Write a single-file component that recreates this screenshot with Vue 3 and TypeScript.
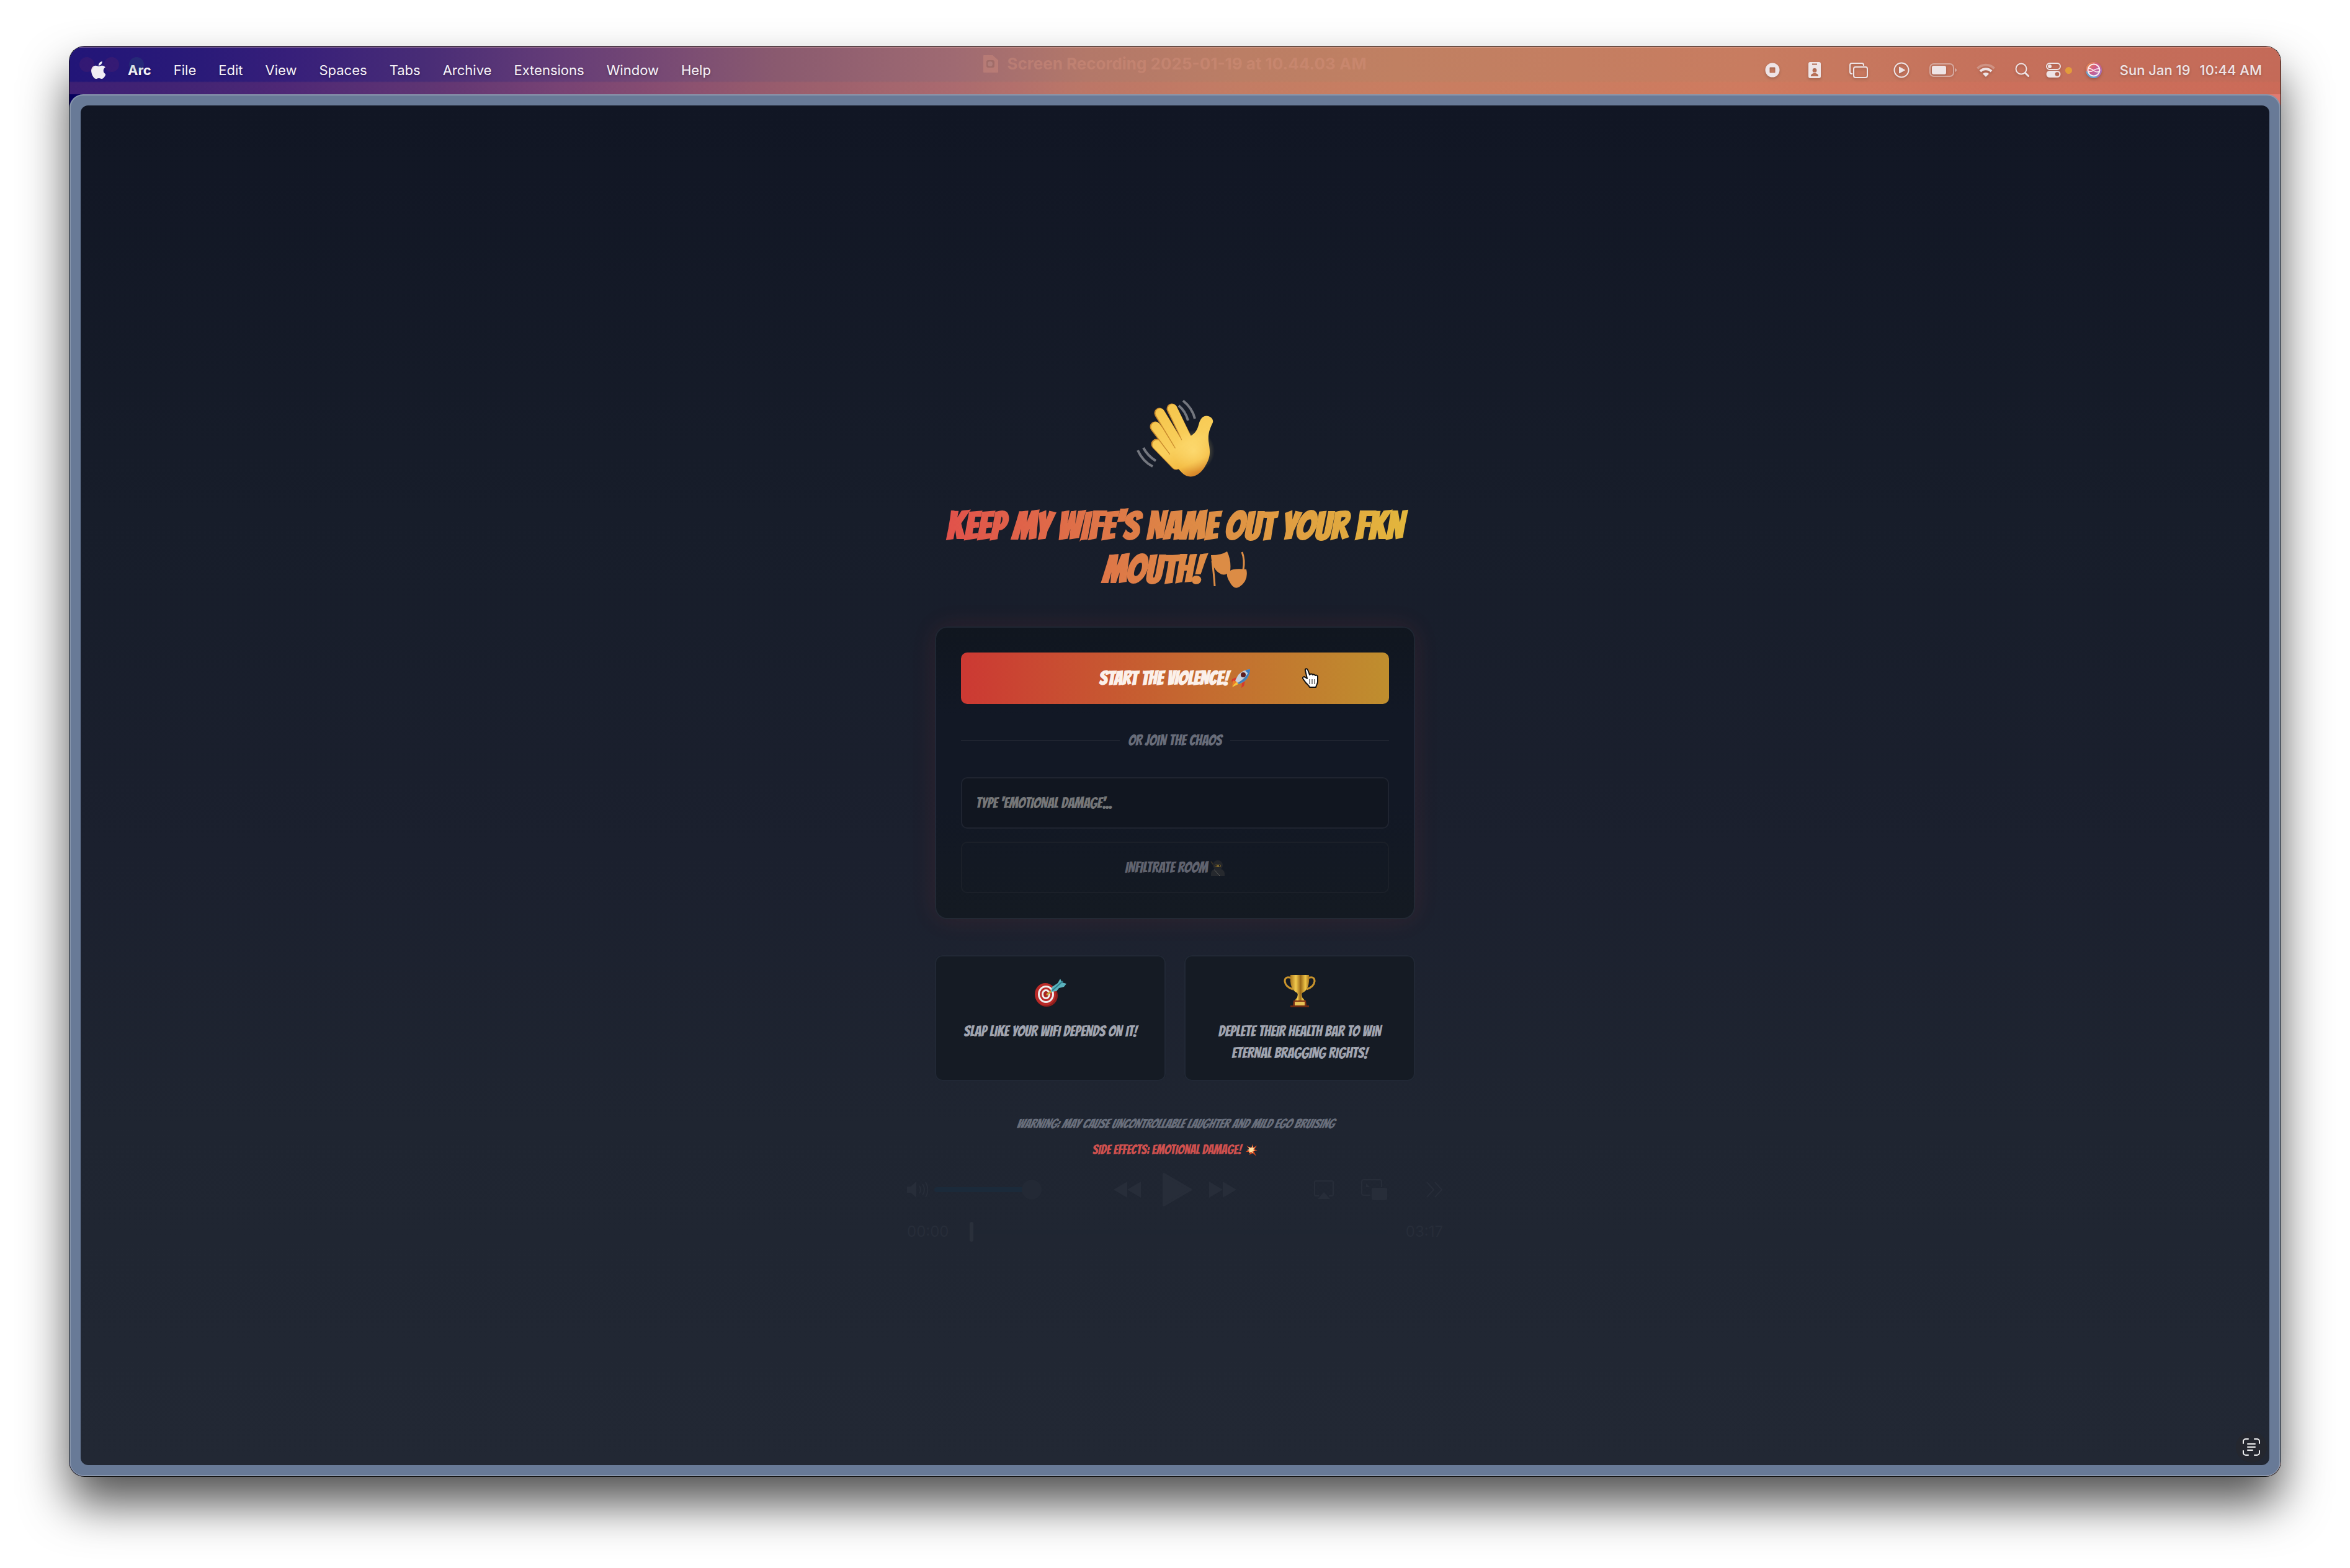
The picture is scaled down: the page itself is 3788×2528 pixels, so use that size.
<script setup lang="ts">
import { ref } from 'vue'

const menus: string[] = ['File', 'Edit', 'View', 'Spaces', 'Tabs', 'Archive', 'Extensions', 'Window', 'Help']
const roomCode = ref('')
const volume = ref(100)
const position = ref(0)
</script>

<template>
  <div class="desktop">
    <div class="window">
      <header class="menubar">
        <div class="ghost-lights"><i></i><i></i><i></i></div>
        <div class="ghost-title">
          <svg viewBox="0 0 24 28" width="24" height="28"><path d="M1 0h14l9 8v19a1 1 0 0 1-1 1H1a1 1 0 0 1-1-1V1a1 1 0 0 1 1-1z" fill="currentColor" /><rect x="5" y="8" width="13" height="12" rx="3" fill="#a06c68" /><circle cx="11" cy="14" r="4" fill="#b07d7a" /></svg>
          <span>Screen Recording 2025-01-19 at 10.44.03 AM</span>
        </div>
        <nav class="menus">
          <svg class="apple" viewBox="4 32 366 448" width="23" height="28"><path fill="#f1eff4" d="M318.7 268.7c-.2-36.7 16.4-64.4 50-84.8-18.8-26.9-47.2-41.7-84.7-44.6-35.5-2.8-74.3 20.7-88.5 20.7-15 0-49.4-19.7-76.4-19.7C63.3 141.2 4 184.8 4 273.5q0 39.3 14.4 81.2c12.8 36.7 59 126.7 107.2 125.2 25.2-.6 43-17.9 75.8-17.9 31.8 0 48.3 17.9 76.4 17.9 48.6-.7 90.4-82.5 102.6-119.3-65.2-30.7-61.7-90-61.7-91.9zm-56.6-164.2c27.3-32.4 24.8-61.9 24-72.5-24.1 1.4-52 16.4-67.9 34.9-17.5 19.8-27.8 44.3-25.6 71.9 26.1 2 49.9-11.4 69.5-34.3z" /></svg>
          <a href="#" class="app-name">Arc</a>
          <a v-for="m in menus" :key="m" href="#">{{ m }}</a>
        </nav>
        <div class="status">
          <svg viewBox="0 0 24 24" width="24" height="24"><path fill="currentColor" fill-rule="evenodd" d="M12 .5a11.500 11.500 0 1 1 0 23 11.500 11.500 0 0 1 0-23zM8.500 7.500a1 1 0 0 0-1 1v7a1 1 0 0 0 1 1h7a1 1 0 0 0 1-1v-7a1 1 0 0 0-1-1z" /></svg>
          <svg class="far" viewBox="0 0 20 28" width="20" height="28"><path fill="currentColor" fill-rule="evenodd" d="M3 1h14a3 3 0 0 1 3 3v20a3 3 0 0 1-3 3H3a3 3 0 0 1-3-3V4a3 3 0 0 1 3-3zM6 3.500v2h8v-2zM10 11a3.400 3.400 0 1 0 0 6.800 3.400 3.400 0 0 0 0-6.800zM4 24h12c0-3.500-2.500-5-6-5s-6 1.500-6 5z" /></svg>
          <svg class="far" viewBox="0 0 30 26" width="30" height="26" fill="none" stroke="currentColor" stroke-width="2"><path d="M5 19H4a3 3 0 0 1-3-3V5a3 3 0 0 1 3-3h16a3 3 0 0 1 3 3v1" /><rect x="7" y="8" width="22" height="17" rx="3" /></svg>
          <svg class="mid" viewBox="0 0 26 26" width="26" height="26"><circle cx="13" cy="13" r="11.500" fill="none" stroke="currentColor" stroke-width="2" /><path d="M9.500 8v10l9-5z" fill="currentColor" stroke="currentColor" stroke-linejoin="round" /></svg>
          <svg class="near" viewBox="0 0 44 22" width="44" height="22"><rect x="1" y="1" width="38" height="20" rx="6" fill="none" stroke="currentColor" stroke-opacity=".5" stroke-width="2" /><rect x="4" y="4" width="23" height="14" rx="3" fill="currentColor" /><path d="M41 8c4 1 4 5 0 6z" fill="currentColor" opacity=".5" /></svg>
          <svg class="near" viewBox="0 0 30 24" width="30" height="24" fill="none" stroke="currentColor" stroke-width="4"><path d="M1.500 9.500a19 19 0 0 1 27 0" opacity=".3" /><path d="M6 14a12.800 12.800 0 0 1 18 0" /><path d="M10 18a7 7 0 0 1 10 0l-5 5z" fill="currentColor" stroke="none" /></svg>
          <svg class="near" viewBox="0 0 24 24" width="24" height="24" fill="none" stroke="currentColor" stroke-linecap="round"><circle cx="10" cy="10" r="8.500" stroke-width="2" /><path d="M16.500 16.500l5 5" stroke-width="3" /></svg>
          <svg class="close" viewBox="0 0 24 24" width="24" height="24"><rect x="1" y="1" width="22" height="10" rx="5" fill="none" stroke="currentColor" stroke-width="2" /><circle cx="6" cy="6" r="3" fill="currentColor" /><path fill="currentColor" fill-rule="evenodd" d="M6 13h12a5.500 5.500 0 0 1 0 11H6a5.500 5.500 0 0 1 0-11zm12 2.200a3.300 3.300 0 1 0 0 6.600 3.300 3.300 0 0 0 0-6.600z" /></svg>
          <i class="mic-dot"></i>
          <svg class="siri" viewBox="0 0 26 26" width="26" height="26">
            <defs><linearGradient id="siri" x1="0" y1="0" x2="1" y2="1"><stop offset="0" stop-color="#eda13d" /><stop offset=".45" stop-color="#d25a86" /><stop offset="1" stop-color="#8f7bd8" /></linearGradient></defs>
            <circle cx="13" cy="13" r="13" fill="url(#siri)" /><path d="M0 14a13 13 0 0 0 20 10c-6-1-12-4-20-10z" fill="#4fb1de" opacity=".8" />
            <g fill="none" stroke="#fbeef0"><circle cx="13" cy="13" r="9.500" stroke-width="2" /><path d="M4 10c7-1 10 9 18 5M4 15c7 3 10-6 18-4" stroke-width="1.500" /></g>
          </svg>
          <span class="clock"><span>Sun Jan 19</span><span>10:44 AM</span></span>
        </div>
      </header>

      <div class="frame">
        <main class="page">
          <div class="column">
            <svg class="wave" viewBox="0 0 128 128" width="128" height="128">
              <defs>
                <linearGradient id="skin" gradientUnits="userSpaceOnUse" x1="40" y1="10" x2="90" y2="124"><stop offset="0" stop-color="#f5c54b" /><stop offset=".6" stop-color="#f9cf5c" /><stop offset=".85" stop-color="#f4bd45" /><stop offset="1" stop-color="#d8892b" /></linearGradient>
                <radialGradient id="glow" gradientUnits="userSpaceOnUse" cx="94" cy="84" r="34"><stop offset="0" stop-color="#ffe07a" /><stop offset="1" stop-color="#ffe07a" stop-opacity="0" /></radialGradient>
              </defs>
              <g fill="none" stroke="#74777f" stroke-width="4"><path d="M77 3q15 12 19 29" /><path d="M70 11q11 9 15 24" /><path d="M4 83q8 18 24 26" /><path d="M13 79q7 13 20 21" /></g>
              <g fill="none" stroke-linecap="round">
                <path d="M34 73L66 106" stroke="#c98a2c" stroke-width="17" /><path d="M35 74L66 106" stroke="url(#skin)" stroke-width="15" />
                <path d="M32 45L70 95" stroke="#c98a2c" stroke-width="17" /><path d="M33 45L70 95" stroke="url(#skin)" stroke-width="15" />
                <path d="M39 23L77 85" stroke="#c98a2c" stroke-width="17" /><path d="M40 23L77 85" stroke="url(#skin)" stroke-width="15" />
                <path d="M59 16L88 75" stroke="#c98a2c" stroke-width="17" /><path d="M60 16L88 75" stroke="url(#skin)" stroke-width="15" />
              </g>
              <path fill="url(#skin)" d="M78 62C86 63 95 58 99 50C103 43 102 36 108 30C114 24 127 29 125 38C121 47 117 54 118 68C120 82 123 92 113 108C104 124 88 132 75 119L52 94L66 78z" />
              <circle cx="94" cy="84" r="34" fill="url(#glow)" opacity=".7" />
            </svg>

            <h1 class="title">Keep my wife's name out your fkn <span class="nowrap">mouth!
              <svg class="masks" viewBox="0 0 60 60" width="60" height="60"><path fill="#dc8c45" d="M1 7Q18 7 27 1Q34 16 32 32Q38 28 58 30Q62 48 47 58Q38 64 31 50Q26 42 27 37Q20 41 13 35Q2 27 1 7z" /><path d="M3 16Q6 40 7 57M51 2Q56 15 53 31" fill="none" stroke="#dc8c45" stroke-width="3" /></svg></span>
            </h1>

            <form class="card" @submit.prevent>
              <button type="button" class="start">
                <span>Start the violence!</span>
                <svg viewBox="0 0 32 32" width="32" height="32"><path d="M9 14L2 17l-1 4 8-2zM18 23l-1 8 4-3 2-8z" fill="#d63a2c" /><path d="M8 20l-6 10 10-5z" fill="#f5c53c" /><path d="M4 19l-2 9 7-6z" fill="#ef7a2a" /><path d="M31 1Q19 2 12 10L7 19l6 6 8-4Q30 14 31 1z" fill="#c6d0dc" /><path d="M31 1q-1 14-10 20l-8 4-2-2Q25 15 31 1z" fill="#4480b8" /><path d="M31 1q-4 0-8 2l6 6q2-4 2-8z" fill="#3c7cc0" /><circle cx="20" cy="10" r="4" fill="#5c1d20" /></svg>
                <svg class="cursor" viewBox="0 0 26 32" width="26" height="32"><path d="M5 4C4 1 8 0 9 3l3 8c1-2 4-2 5 0 1-1 3-1 4 1 2-1 4 0 4 2v8c0 3-2 5-3 9l-10 0c-1-3-4-5-6-7l-5-7c-1-2 2-4 4-2l3 2z" fill="#fff" stroke="#111" stroke-width="2" stroke-linejoin="round" /><path d="M12 18v8M16 18v8M20 18v8" stroke="#111" stroke-width="1" fill="none" /></svg>
              </button>
              <div class="divider"><span>Or join the chaos</span></div>
              <div class="join">
                <input v-model="roomCode" type="text" aria-label="Room code" placeholder="TYPE 'EMOTIONAL DAMAGE'..." />
                <button type="submit" class="infiltrate">
                  <span>Infiltrate room</span>
                  <svg viewBox="0 0 24 26" width="24" height="26"><path d="M1 3l10 13" stroke="#3a3326" stroke-width="2" /><path d="M1 26q-1-9 6-11h10q7 2 6 11z" fill="#26292e" /><circle cx="12" cy="9" r="8" fill="#23262b" /><rect x="7" y="8" width="10" height="4" rx="2" fill="#7a642c" /><path d="M8 10h2M14 10h2" stroke="#15171c" stroke-width="2" /><path d="M6 16l9 10" stroke="#5a5a58" /></svg>
                </button>
              </div>
            </form>

            <section class="features">
              <article>
                <svg viewBox="0 0 54 54" width="54" height="54"><ellipse cx="21" cy="34" rx="18" ry="18" fill="#8d1f1d" /><ellipse cx="19" cy="32" rx="17" ry="18" fill="#b92a28" /><ellipse cx="20" cy="32" rx="13" ry="14" fill="#eee" /><ellipse cx="20" cy="32" rx="10" ry="11" fill="#b92a28" /><ellipse cx="20" cy="32" rx="7" ry="8" fill="#eee" /><ellipse cx="20" cy="32" rx="4" ry="5" fill="#a82522" /><path d="M21 33l8-6" stroke="#c9a23a" stroke-width="3" /><path d="M28 28l2-8 9-6 4-7 3 6 7 2-4 5-8 2-4 5z" fill="#5ab3be" /><path d="M30 26L47 11" stroke="#2f7f8c" stroke-width="2" /></svg>
                <p>Slap like your wifi depends on it!</p>
              </article>
              <article>
                <svg viewBox="0 0 54 54" width="54" height="54"><defs><linearGradient id="gold"><stop offset="0" stop-color="#a8741c" /><stop offset=".3" stop-color="#f2ca4e" /><stop offset=".55" stop-color="#9c6a18" /><stop offset=".8" stop-color="#efc648" /><stop offset="1" stop-color="#a8741c" /></linearGradient></defs><path d="M14 6Q3 2 3 11q1 9 13 13M40 6q11-4 11 5-1 9-13 13" fill="none" stroke="#c9942c" stroke-width="3" /><path d="M12 1h30q2 23-11 29l-1 3h-6l-1-3Q10 24 12 1z" fill="url(#gold)" /><path d="M24 32h6l1 5 5 6H18l5-6z" fill="url(#gold)" /><path d="M17 42h20l1 8H16z" fill="#803114" /><rect x="19" y="44" width="16" height="6" fill="#e8c256" /><path d="M12 50h30v3H12z" fill="#6c2a12" /></svg>
                <p>Deplete their health bar to win eternal bragging rights!</p>
              </article>
            </section>

            <footer class="notes">
              <p class="warn">Warning: may cause uncontrollable laughter and mild ego bruising</p>
              <p class="side"><span>Side effects: emotional damage!</span><svg viewBox="0 0 20 20" width="20" height="20"><path d="M10 6L13 0l0 6 6-3-4 6 5 2-6 1 4 8-6-5-5 3 1-5-7 0 6-4-5-6 6 3z" fill="#d6481f" /><path d="M10 7l2-4 0 4 4-1-3 3 3 2-4 1 1 4-3-3-4 2 1-4-4-1 4-1-2-4z" fill="#fbe0a0" /></svg></p>
            </footer>
          </div>

          <div class="player">
            <div class="player-row">
              <svg viewBox="0 0 34 26" width="34" height="26"><path d="M0 8h6l9-8v26l-9-8H0z" fill="currentColor" /><path d="M20 7q4 6 0 12M25 4q6 9 0 18M30 1q7 12 0 24" fill="none" stroke="currentColor" stroke-width="2" /></svg>
              <input v-model="volume" class="volume" type="range" aria-label="Volume" />
              <button type="button" class="rewind" aria-label="Rewind"><svg viewBox="0 0 44 26" width="44" height="26"><path d="M22 0v26L0 13zM44 0v26L22 13z" fill="currentColor" /></svg></button>
              <button type="button" class="play" aria-label="Play"><svg viewBox="0 0 48 56" width="48" height="56"><path d="M3 3v50l43-25z" fill="currentColor" stroke="currentColor" stroke-width="4" stroke-linejoin="round" /></svg></button>
              <button type="button" class="forward" aria-label="Fast forward"><svg viewBox="0 0 44 26" width="44" height="26"><path d="M0 0v26l22-13zM22 0v26l22-13z" fill="currentColor" /></svg></button>
              <button type="button" class="airplay" aria-label="AirPlay"><svg viewBox="0 0 32 30" width="32" height="30"><path d="M8 25H3a2 2 0 0 1-2-2V3a2 2 0 0 1 2-2h26a2 2 0 0 1 2 2v20a2 2 0 0 1-2 2h-5" fill="none" stroke="currentColor" stroke-width="2" /><path d="M16 19l10 11H6z" fill="currentColor" /></svg></button>
              <button type="button" class="pip" aria-label="Picture in picture"><svg viewBox="0 0 42 34" width="42" height="34"><path d="M15 26H4a3 3 0 0 1-3-3V4a3 3 0 0 1 3-3h26a3 3 0 0 1 3 3v9" fill="none" stroke="currentColor" stroke-width="2" /><rect x="17" y="14" width="25" height="20" rx="3" fill="currentColor" /><path d="M8 7v6h6z" fill="currentColor" /></svg></button>
              <button type="button" class="more" aria-label="More"><svg viewBox="0 0 28 26" width="28" height="26"><path d="M2 1l11 12L2 25M15 1l11 12-11 12" fill="none" stroke="currentColor" stroke-width="2" /></svg></button>
            </div>
            <div class="player-row">
              <span>00:00</span>
              <input v-model="position" class="seek" type="range" aria-label="Position" />
              <span>03:17</span>
            </div>
          </div>

          <button type="button" class="live-text" aria-label="Live text">
            <svg viewBox="0 0 28 28" width="28" height="28" fill="none" stroke="#f0f1f2" stroke-width="2" stroke-linecap="round"><path d="M1 8V5a4 4 0 0 1 4-4h4M19 1h4a4 4 0 0 1 4 4v3M27 20v3a4 4 0 0 1-4 4h-4M9 27H5a4 4 0 0 1-4-4v-3" /><path d="M8 9h12M8 14h12M8 19h8" /></svg>
          </button>
        </main>
      </div>
    </div>
  </div>
</template>

<style>
body {
  background: #fff;
}
</style>

<style scoped>
* {
  box-sizing: border-box;
}
h1,
p {
  margin: 0;
}
button {
  font: inherit;
}
svg {
  display: block;
  flex: none;
}

.desktop {
  display: flex;
  min-height: 100vh;
  padding: 75px 112px 148px;
  background: #fff;
}
.window {
  flex: 1;
  min-width: 0;
  display: flex;
  flex-direction: column;
  border-radius: 24px;
  background: linear-gradient(90deg, #06005c, #06005c 24%, #d8755f 50%, #e07b72);
  box-shadow: 0 0 0 1px #111, 0 44px 76px rgba(0, 0, 0, 0.68);
  overflow: hidden;
}

.menubar {
  position: relative;
  display: flex;
  justify-content: space-between;
  align-items: center;
  height: 77px;
  padding: 0 30px 3px 35px;
  border-top: 2px solid rgba(255, 255, 255, 0.2);
  background:
    linear-gradient(180deg, transparent 54px, rgba(255, 110, 90, 0.12) 56px),
    linear-gradient(90deg, #221578 0%, #2a1a78 6%, #371f7a 10%, #482c76 16%, #643c77 22%, #784a74 27%, #8a5a6f 32%, #9f6a72 40%, #b37869 46%, #bb7e65 53%, #c08062 60%, #c87c60 76%, #c5705b 88%, #c46a58 100%);
  font-family: Inter, "Liberation Sans", sans-serif;
  font-size: 22px;
  line-height: 30px;
  color: #eee4e6;
}
.menus {
  display: flex;
  align-items: center;
  gap: 36px;
}
.menus a {
  color: #f6f2f8;
  text-decoration: none;
  text-shadow: 0 2px 4px rgba(0, 0, 0, 0.25);
}
.menus .app-name {
  font-weight: 700;
}
.status {
  display: flex;
  align-items: center;
}
.status svg {
  filter: drop-shadow(0 2px 2px rgba(0, 0, 0, 0.2));
}
.far {
  margin-left: 46px;
}
.mid {
  margin-left: 41px;
}
.near {
  margin-left: 32px;
}
.close {
  margin-left: 26px;
}
.mic-dot {
  width: 11px;
  height: 11px;
  margin-left: 7px;
  border-radius: 50%;
  background: #e39c3b;
}
.siri {
  margin-left: 22px;
}
.clock {
  display: flex;
  gap: 15px;
  margin-left: 29px;
  font-weight: 500;
  text-shadow: 0 2px 4px rgba(0, 0, 0, 0.2);
}
.ghost-lights {
  position: absolute;
  top: 15px;
  left: 16px;
  display: flex;
  gap: 16px;
}
.ghost-lights i {
  width: 24px;
  height: 24px;
  border-radius: 50%;
  background: rgba(200, 60, 90, 0.1);
}
.ghost-lights i:last-child {
  background: rgba(40, 140, 120, 0.15);
}
.ghost-title {
  position: absolute;
  top: 11px;
  left: 0;
  right: 0;
  display: flex;
  justify-content: center;
  align-items: center;
  gap: 14px;
  color: rgba(220, 150, 130, 0.35);
  font-size: 26px;
  font-weight: 700;
}

.frame {
  flex: 1;
  display: flex;
  padding: 18px;
  border-radius: 22px;
  background: #687a97;
  box-shadow: inset 0 0 0 2px rgba(255, 255, 255, 0.22);
}
.page {
  position: relative;
  flex: 1;
  display: flex;
  justify-content: center;
  align-items: center;
  border-radius: 12px;
  background: linear-gradient(180deg, #111624 0%, #171d2a 30%, #1b202e 55%, #1f2531 75%, #222834 100%);
  font-family: Bangers, "Liberation Sans Narrow", sans-serif;
  font-weight: 400;
  text-transform: uppercase;
}
.column {
  display: flex;
  flex-direction: column;
  width: 774px;
  max-width: 100%;
  padding: 4px 0 24px;
}
.wave {
  align-self: center;
}
.title {
  margin-top: 42px;
  font-size: 62px;
  font-weight: 700;
  line-height: 70px;
  text-align: center;
  color: transparent;
  background: linear-gradient(90deg, #e14f4b, #dd8646 50%, #e3b83c);
  background-clip: text;
  -webkit-background-clip: text;
}
.nowrap {
  display: inline-flex;
  align-items: center;
  gap: 12px;
  height: 70px;
  vertical-align: top;
}

.card {
  display: flex;
  flex-direction: column;
  margin-top: 57px;
  padding: 42px;
  border-radius: 20px;
  background: linear-gradient(180deg, #10161f, #121825 30%, #121825 60%, #141a22);
  box-shadow: inset 0 0 0 2px rgba(140, 150, 180, 0.13), 0 0 40px rgba(239, 68, 68, 0.11);
}
.start,
.infiltrate {
  position: relative;
  display: flex;
  justify-content: center;
  align-items: center;
  gap: 4px;
  height: 83px;
  padding: 0;
  border: 0;
  border-radius: 10px;
  text-transform: inherit;
}
.start {
  background: linear-gradient(90deg, #cc3933, #c56530 50%, #bf8e2e);
  color: #fbf0ea;
  font-size: 31px;
  font-weight: 700;
  line-height: 34px;
}
.cursor {
  position: absolute;
  right: 114px;
  top: 25px;
}
.divider {
  display: flex;
  align-items: center;
  gap: 13px;
  margin: 42px 0;
  color: #686c79;
  font-size: 24px;
  line-height: 34px;
}
.divider::before,
.divider::after {
  content: "";
  flex: 1;
  height: 2px;
  background: #1f2430;
}
.join {
  display: flex;
  flex-direction: column;
  gap: 21px;
}
.join input {
  width: 100%;
  height: 83px;
  padding: 0 22px;
  border: 2px solid #1f2430;
  border-radius: 10px;
  background: #111620;
  color: #a0a4af;
  font: inherit;
  font-size: 24px;
}
.join input::placeholder {
  color: #757678;
  opacity: 1;
}
.infiltrate {
  border: 2px solid #1b2029;
  background: transparent;
  color: #60636f;
  font-size: 24px;
  line-height: 34px;
}

.features {
  display: grid;
  grid-template-columns: 1fr 1fr;
  gap: 30px;
  margin-top: 58px;
}
.features article {
  display: flex;
  flex-direction: column;
  align-items: center;
  padding: 31px 28px 28px;
  border-radius: 12px;
  background: #151b24;
  box-shadow: inset 0 0 0 2px #212835;
}
.features p {
  margin-top: 20px;
  color: #a0a4af;
  font-size: 24px;
  line-height: 35px;
  text-align: center;
}
.notes {
  display: flex;
  flex-direction: column;
  gap: 12px;
  align-items: center;
  margin-top: 54px;
  font-size: 21px;
  line-height: 30px;
}
.warn {
  color: #686e7b;
  font-style: italic;
  white-space: nowrap;
}
.side {
  display: flex;
  align-items: center;
  gap: 6px;
  color: #ce504e;
}

.player {
  position: absolute;
  left: 50%;
  bottom: 358px;
  display: flex;
  flex-direction: column;
  gap: 22px;
  width: 864px;
  margin-left: -432px;
  color: #272d39;
  font-family: Inter, "Liberation Sans", sans-serif;
  font-size: 24px;
}
.player-row {
  display: flex;
  align-items: center;
  line-height: 36px;
}
.player button {
  padding: 0;
  border: 0;
  background: none;
  color: inherit;
}
.player input {
  appearance: none;
  background: transparent;
}
.volume {
  width: 173px;
  height: 32px;
  margin: 0 0 0 10px;
}
.volume::-webkit-slider-runnable-track {
  height: 8px;
  border-radius: 4px;
  background: #1b2a3a;
}
.volume::-webkit-slider-thumb {
  appearance: none;
  width: 32px;
  height: 32px;
  margin-top: -12px;
  border-radius: 50%;
  background: #232935;
}
.rewind {
  margin-left: 116px;
}
.play {
  margin-left: 34px;
}
.forward {
  margin-left: 28px;
}
.airplay {
  margin-left: auto;
}
.pip {
  margin-left: 44px;
}
.more {
  margin-left: 62px;
}
.seek {
  flex: 1;
  height: 32px;
  margin: 0 30px 0 34px;
}
.seek::-webkit-slider-runnable-track {
  height: 6px;
  background: #1f2632;
}
.seek::-webkit-slider-thumb {
  appearance: none;
  width: 6px;
  height: 32px;
  margin-top: -13px;
  border-radius: 3px;
  background: #2a303b;
}
.live-text {
  position: absolute;
  right: 4px;
  bottom: 4px;
  display: flex;
  justify-content: center;
  align-items: center;
  width: 50px;
  height: 50px;
  padding: 0;
  border: 0;
  border-radius: 50%;
  background: #24272f;
}
</style>
